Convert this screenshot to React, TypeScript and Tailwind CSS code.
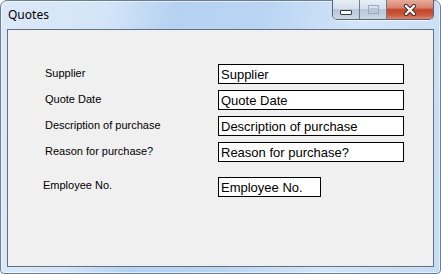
import React from "react";

const rows = [
  { label: "Supplier", value: "Supplier" },
  { label: "Quote Date", value: "Quote Date" },
  { label: "Description of purchase", value: "Description of purchase" },
  { label: "Reason for purchase?", value: "Reason for purchase?" },
];

function WindowButtons() {
  return (
    <div className="flex h-[20px] -mt-[1px] rounded-b-[5px] border border-t-0 border-[#56667a] overflow-hidden shadow-[0_1px_0_rgba(255,255,255,0.7)]">
      {/* minimize */}
      <div className="w-[27px] h-full flex items-center justify-center border-r border-[#6d7c8f] bg-[linear-gradient(180deg,#e6edf5_0%,#d6e0ec_45%,#b8c8db_50%,#c9d6e5_100%)]">
        <div className="w-[12px] h-[5px] mt-[5px] bg-white border border-[#2d3a48] rounded-[1px]" />
      </div>
      {/* maximize (disabled) */}
      <div className="w-[27px] h-full flex items-center justify-center border-r border-[#6d7c8f] bg-[linear-gradient(180deg,#e6edf5_0%,#d6e0ec_45%,#b8c8db_50%,#c9d6e5_100%)]">
        <div className="w-[11px] h-[9px] border border-[#9aa9ba] flex items-center justify-center">
          <div className="w-[7px] h-[4px] border border-[#b6c3d1]" />
        </div>
      </div>
      {/* close */}
      <div className="w-[46px] h-full flex items-center justify-center bg-[linear-gradient(180deg,#e7ab9c_0%,#d98370_40%,#c4442b_52%,#cc5a40_80%,#dd8a70_100%)]">
        <svg width="14" height="12" viewBox="0 0 14 12">
          <path d="M3 2 L11 10 M11 2 L3 10" stroke="#3b2a26" strokeWidth="4.2" strokeLinecap="round" />
          <path d="M3 2 L11 10 M11 2 L3 10" stroke="#ffffff" strokeWidth="2.4" strokeLinecap="round" />
        </svg>
      </div>
    </div>
  );
}

export default function App() {
  return (
    <div className="w-[441px] h-[274px] flex flex-col rounded-t-[7px] rounded-b-[4px] border border-[#6c7e93] bg-[linear-gradient(100deg,#dce9f9_0%,#d4e5f8_22%,#b5d2f2_36%,#bad5f3_55%,#d3e5f8_75%,#c6dcf5_100%)] shadow-[inset_0_0_0_1px_rgba(255,255,255,0.55)]">
      <div className="h-[28px] flex items-start justify-between pl-[7px] pr-[6px]">
        <span className="pt-[6px] text-[12px] leading-[16px] text-black [font-family:'Noto_Sans','Liberation_Sans',sans-serif]">
          Quotes
        </span>
        <WindowButtons />
      </div>

      <div className="mx-[6px] h-[238px] border border-[#617184] bg-[#f0f0f0] pt-[34px]">
        <div className="flex flex-col gap-[6px] [font-family:'Liberation_Sans',Arial,sans-serif]">
          {rows.map((r) => (
            <div key={r.label} className="flex items-start">
              <span className="w-[210px] shrink-0 pl-[37px] pt-[3px] text-[11px] leading-[13px] text-black">
                {r.label}
              </span>
              <input
                readOnly
                value={r.value}
                className="w-[186px] h-[20px] border border-black bg-white px-[2px] text-[13px] text-black outline-none"
              />
            </div>
          ))}
          <div className="flex items-start mt-[9px]">
            <span className="w-[210px] shrink-0 pl-[35px] pt-[2px] text-[11px] leading-[13px] text-black">
              Employee No.
            </span>
            <input
              readOnly
              value="Employee No."
              className="w-[103px] h-[20px] border border-black bg-white px-[2px] text-[13px] text-black outline-none"
            />
          </div>
        </div>
      </div>
    </div>
  );
}
